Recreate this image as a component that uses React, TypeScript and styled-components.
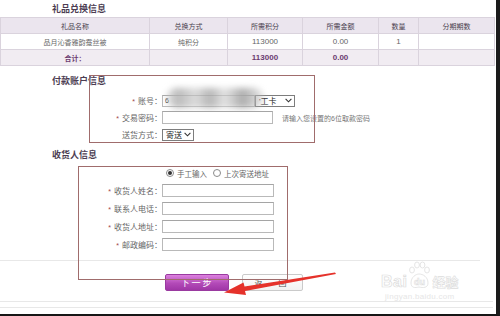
import React from "react";
import styled, { createGlobalStyle } from "styled-components";

const GlobalStyle = createGlobalStyle`
  html, body {
    margin: 0;
    padding: 0;
    background: #fff;
  }
  body {
    font-family: "Liberation Sans", "Noto Sans CJK SC", sans-serif;
  }
`;

const Page = styled.div`
  position: relative;
  width: 500px;
  height: 316px;
  box-sizing: border-box;
  border-right: 4px solid #1b1b1b;
  border-bottom: 2px solid #161616;
  overflow: hidden;
  background: #fff;
  color: #666;
`;

const SectionTitle = styled.div<{ $top: number; $h?: number }>`
  height: ${(p) => p.$h ?? 14}px;
  line-height: ${(p) => p.$h ?? 14}px;
  margin-top: ${(p) => p.$top}px;
  padding-left: 52px;
  font-size: 9px;
  font-weight: bold;
  color: #4c3d52;
`;

const Table = styled.table`
  width: 494px;
  border-collapse: collapse;
  table-layout: fixed;
  font-size: 7px;

  th,
  td {
    height: 15px;
    padding: 0;
    border: 1px solid #dad3dd;
    text-align: center;
    white-space: nowrap;
  }
  th {
    font-weight: normal;
    color: #4a3f4f;
  }
  td {
    color: #666;
  }
`;

const HeadRow = styled.tr`
  background: #ebe5ee;
`;

const TotalRow = styled.tr`
  background: #f1ecf2;
  td {
    color: #6b3b70;
    font-weight: bold;
  }
`;

const Num = styled.span`
  font-size: 8px;
`;

const FormGrid = styled.div<{ $row: number; $top: number }>`
  display: grid;
  grid-template-columns: 162px auto;
  grid-auto-rows: ${(p) => p.$row}px;
  align-items: center;
  margin-top: ${(p) => p.$top}px;
`;

const Label = styled.div`
  text-align: right;
  font-size: 8px;
  color: #666;
  white-space: nowrap;
`;

const Star = styled.span`
  color: #a04848;
  font-size: 7px;
  margin-right: 3px;
`;

const Field = styled.div`
  position: relative;
  display: flex;
  align-items: center;
  height: 100%;
`;

const TextInput = styled.input<{ $w: number; $h?: number }>`
  box-sizing: border-box;
  width: ${(p) => p.$w}px;
  height: ${(p) => p.$h ?? 12}px;
  margin: 0;
  padding: 0 2px;
  border: 1px solid #b9b9b9;
  border-top-color: #a5a5a5;
  background: #fff;
  font-size: 7px;
  color: #333;
  outline: none;
`;

const SelectBox = styled.div<{ $w: number }>`
  box-sizing: border-box;
  display: flex;
  align-items: center;
  justify-content: space-between;
  width: ${(p) => p.$w}px;
  height: 12px;
  padding: 0 2px 0 3px;
  border: 1px solid #7d7d7d;
  background: #fff;
  font-size: 8px;
  color: #222;
`;

const Hint = styled.span`
  margin-left: 9px;
  font-size: 7px;
  color: #777;
  white-space: nowrap;
`;

const Mosaic = styled.div`
  position: absolute;
  left: 4px;
  top: -4px;
  width: 98px;
  height: 20px;
  border-radius: 10px;
  background: linear-gradient(
    90deg,
    rgba(205, 205, 205, 0.5) 0%,
    rgba(175, 175, 175, 0.85) 12%,
    rgba(205, 205, 205, 0.7) 30%,
    rgba(170, 170, 170, 0.85) 45%,
    rgba(215, 215, 215, 0.7) 60%,
    rgba(165, 165, 165, 0.9) 78%,
    rgba(200, 200, 200, 0.4) 100%
  );
  filter: blur(3px);
`;

const RadioRow = styled.div`
  display: flex;
  align-items: center;
  height: 16px;
  margin-top: 3px;
  padding-left: 166px;
  font-size: 7.5px;
  color: #666;
`;

const Radio = styled.span<{ $on?: boolean }>`
  box-sizing: border-box;
  display: inline-flex;
  align-items: center;
  justify-content: center;
  width: 8px;
  height: 8px;
  margin-right: 3px;
  border: 1px solid #8a8a8a;
  border-radius: 50%;
  background: #fff;

  &::after {
    content: "";
    width: 4px;
    height: 4px;
    border-radius: 50%;
    background: ${(p) => (p.$on ? "#333" : "transparent")};
  }
`;

const RadioText = styled.span`
  margin-right: 6px;
`;

const Rule = styled.div<{ $top: number; $w?: number }>`
  width: ${(p) => p.$w ?? 480}px;
  height: 1px;
  margin-top: ${(p) => p.$top}px;
  background: #e8e8e8;
`;

const ButtonRow = styled.div`
  display: flex;
  gap: 13px;
  margin-top: 13px;
  padding-left: 165px;
`;

const PrimaryButton = styled.button`
  box-sizing: border-box;
  width: 64px;
  height: 17px;
  padding: 0;
  border: 1px solid #9a3aa0;
  border-radius: 2px;
  background: linear-gradient(#dc82de, #b34ab8 55%, #9f36a6);
  color: #fff;
  font-family: inherit;
  font-size: 9px;
  letter-spacing: 2px;
`;

const SecondaryButton = styled.button`
  box-sizing: border-box;
  width: 61px;
  height: 17px;
  padding: 0;
  border: 1px solid #cacaca;
  border-radius: 2px;
  background: linear-gradient(#fff, #f2f2f2);
  color: #555;
  font-family: inherit;
  font-size: 8px;
  letter-spacing: 4px;
`;

/* the cropped footer links: only the tops of the glyphs show, drawn as a band */
const FooterStrip = styled.div`
  height: 3px;
  margin-top: 6px;
  margin-left: 30px;
  width: 350px;
  background: repeating-linear-gradient(
    90deg,
    #222 0 2px,
    transparent 2px 4px,
    #333 4px 5px,
    transparent 5px 9px
  );
`;

const Annotation = styled.div<{ $x: number; $y: number; $w: number; $h: number }>`
  position: absolute;
  left: ${(p) => p.$x}px;
  top: ${(p) => p.$y}px;
  width: ${(p) => p.$w}px;
  height: ${(p) => p.$h}px;
  box-sizing: border-box;
  border: 1px solid #a06c6c;
  pointer-events: none;
`;

const Arrow = styled.svg`
  position: absolute;
  left: 220px;
  top: 266px;
  width: 122px;
  height: 36px;
  overflow: visible;
`;

const Watermark = styled.div`
  position: absolute;
  left: 381px;
  top: 261px;
  width: 100px;
  color: transparent;
  pointer-events: none;
`;

const WmLine = styled.div`
  display: flex;
  align-items: flex-end;
  height: 28px;
`;

const WmBai = styled.span`
  font-size: 16px;
  font-weight: bold;
  line-height: 14px;
  -webkit-text-stroke: 0.7px #dcdcdc;
  letter-spacing: 0.5px;
`;

const WmPaw = styled.svg`
  width: 22px;
  height: 28px;
  margin: 0 2px 0 1px;
`;

const WmCn = styled.span`
  font-family: "Noto Sans CJK SC", sans-serif;
  font-size: 13px;
  font-weight: bold;
  line-height: 14px;
  -webkit-text-stroke: 0.6px #dcdcdc;
`;

const WmUrl = styled.div`
  margin-top: 3px;
  padding-left: 4px;
  font-size: 8px;
  color: #e6e6e6;
  letter-spacing: 0.3px;
`;

const Chevron = () => (
  <svg width="7" height="5" viewBox="0 0 7 5">
    <path d="M0.6 0.8 L3.5 3.8 L6.4 0.8" fill="none" stroke="#333" strokeWidth="1.1" />
  </svg>
);

export default function App() {
  return (
    <>
      <GlobalStyle />
      <Page>
        <SectionTitle $top={2} $h={15}>礼品兑换信息</SectionTitle>
        <Table>
          <colgroup>
            <col style={{ width: 149 }} />
            <col style={{ width: 78 }} />
            <col style={{ width: 75 }} />
            <col style={{ width: 76 }} />
            <col style={{ width: 40 }} />
            <col style={{ width: 76 }} />
          </colgroup>
          <tbody>
            <HeadRow>
              <th>礼品名称</th>
              <th>兑换方式</th>
              <th>所需积分</th>
              <th>所需金额</th>
              <th>数量</th>
              <th>分期期数</th>
            </HeadRow>
            <tr>
              <td>品月沁香雅韵蚕丝被</td>
              <td>纯积分</td>
              <td><Num>113000</Num></td>
              <td><Num>0.00</Num></td>
              <td><Num>1</Num></td>
              <td></td>
            </tr>
            <TotalRow>
              <td>合计：</td>
              <td></td>
              <td><Num>113000</Num></td>
              <td><Num>0.00</Num></td>
              <td></td>
              <td></td>
            </TotalRow>
          </tbody>
        </Table>

        <SectionTitle $top={8}>付款账户信息</SectionTitle>
        <FormGrid $row={17} $top={4}>
          <Label><Star>*</Star>账号：</Label>
          <Field>
            <TextInput $w={93} readOnly value="6" />
            <SelectBox $w={40}>
              <span>'工卡</span>
              <Chevron />
            </SelectBox>
            <Mosaic />
          </Field>
          <Label><Star>*</Star>交易密码：</Label>
          <Field>
            <TextInput $w={111} $h={13} readOnly />
            <Hint>请输入您设置的6位取款密码</Hint>
          </Field>
          <Label>送货方式：</Label>
          <Field>
            <SelectBox $w={32}>
              <span>寄送</span>
              <Chevron />
            </SelectBox>
          </Field>
        </FormGrid>

        <SectionTitle $top={5}>收货人信息</SectionTitle>
        <RadioRow>
          <Radio $on />
          <RadioText>手工输入</RadioText>
          <Radio />
          <RadioText>上次寄送地址</RadioText>
        </RadioRow>
        <FormGrid $row={18} $top={0}>
          <Label><Star>*</Star>收货人姓名：</Label>
          <Field><TextInput $w={112} $h={13} readOnly /></Field>
          <Label><Star>*</Star>联系人电话：</Label>
          <Field><TextInput $w={112} $h={13} readOnly /></Field>
          <Label><Star>*</Star>收货人地址：</Label>
          <Field><TextInput $w={112} $h={13} readOnly /></Field>
          <Label><Star>*</Star>邮政编码：</Label>
          <Field><TextInput $w={112} $h={13} readOnly /></Field>
        </FormGrid>

        <Rule $top={7} />
        <ButtonRow>
          <PrimaryButton>下一步</PrimaryButton>
          <SecondaryButton>返　回</SecondaryButton>
        </ButtonRow>
        <Rule $top={10} $w={493} />
        <Rule $top={5} $w={493} />
        <FooterStrip />

        <Annotation $x={89} $y={75} $w={226} $h={68} />
        <Annotation $x={78} $y={166} $w={210} $h={114} />

        <Arrow viewBox="0 0 122 36">
          <polygon
            points="115,6.5 116,8 25,25 26,29 4,26.5 23.5,16.5 24.5,20.5"
            fill="#e5322b"
          />
        </Arrow>

        <Watermark>
          <WmLine>
            <WmBai>Bai</WmBai>
            <WmPaw viewBox="0 0 22 28">
              <g fill="none" stroke="#dedede" strokeWidth="0.8">
                <ellipse cx="4" cy="9" rx="2.4" ry="3" />
                <ellipse cx="9" cy="4" rx="2.4" ry="3" />
                <ellipse cx="14.5" cy="4" rx="2.4" ry="3" />
                <ellipse cx="19" cy="9" rx="2.4" ry="3" />
                <path d="M3 22 C3 16 8 13 11 13 C15 13 20 16 20 22 C20 27 15 27 11 26 C7 27 3 27 3 22 Z" />
              </g>
              <text x="11.5" y="24" textAnchor="middle" fontSize="9" fontWeight="bold" fill="none" stroke="#dedede" strokeWidth="0.6" fontFamily="Liberation Sans, sans-serif">du</text>
            </WmPaw>
            <WmCn>经验</WmCn>
          </WmLine>
          <WmUrl>jingyan.baidu.com</WmUrl>
        </Watermark>
      </Page>
    </>
  );
}
